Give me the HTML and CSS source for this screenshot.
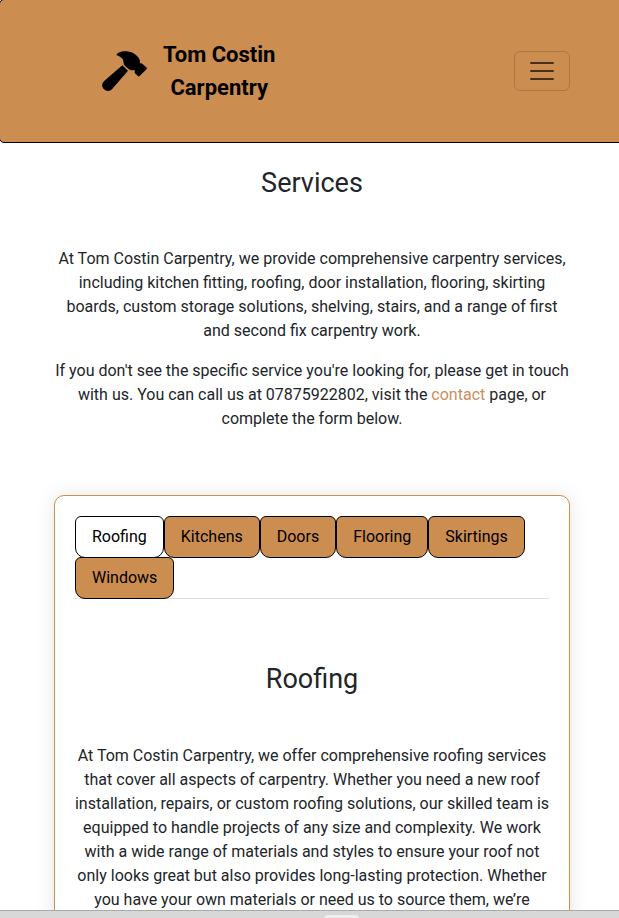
FILE: index.html
```html
<!DOCTYPE html>
<html lang="en">
<head>
<meta charset="utf-8">
<title>Tom Costin Carpentry</title>
<link rel="stylesheet" href="styles.css">
</head>
<body>
<div class="page">
  <header class="header">
    <a class="brand">
      <svg class="hammer" viewBox="0 0 135 121" fill="currentColor" aria-hidden="true"><path d="M45 8C55 1 65 0 74 1C86 2 96 6 103 13L109 19Q115 26 114 38Q119 36 123 40L134 50Q136 52 134 55L113 76Q111 78 108 76L99 67Q97 64 100 58Q90 60 81 55L69 45Q64 40 64 31L63 26Q57 17 45 13Q42 10 45 8Z"/><path d="M61 43L78 60L31 114C24 122 13 123 6 116C-2 109-2 98 6 91Z"/></svg>
      <span class="brand-name">Tom Costin<br>Carpentry</span>
    </a>
    <button class="toggler" aria-label="Menu">
      <svg width="30" height="30" viewBox="0 0 30 30"><path stroke="currentColor" stroke-linecap="round" stroke-miterlimit="10" stroke-width="2" d="M4 7h22M4 15h22M4 23h22"/></svg>
    </button>
  </header>
  <main class="container">
    <h2 class="title">Services</h2>
    <p>At Tom Costin Carpentry, we provide comprehensive carpentry services, including kitchen fitting, roofing, door installation, flooring, skirting boards, custom storage solutions, shelving, stairs, and a range of first and second fix carpentry work.</p>
    <p>If you don't see the specific service you're looking for, please get in touch with us. You can call us at 07875922802, visit the <a class="link">contact</a> page, or complete the form below.</p>
    <section class="card">
      <ul class="tabs">
        <li class="tab active">Roofing</li>
        <li class="tab">Kitchens</li>
        <li class="tab">Doors</li>
        <li class="tab">Flooring</li>
        <li class="tab">Skirtings</li>
        <li class="tab">Windows</li>
      </ul>
      <h2 class="panel-title">Roofing</h2>
      <p class="panel-text">At Tom Costin Carpentry, we offer comprehensive roofing services that cover all aspects of carpentry. Whether you need a new roof installation, repairs, or custom roofing solutions, our skilled team is equipped to handle projects of any size and complexity. We work with a wide range of materials and styles to ensure your roof not only looks great but also provides long-lasting protection. Whether you have your own materials or need us to source them, we’re</p>
    </section>
  </main>
</div>
<div class="bottom-bar"><span class="handle"></span></div>
</body>
</html>
```
FILE: styles.css
```css
* { box-sizing: border-box; }

body {
  margin: 0;
  height: 918px;
  overflow: hidden;
  display: flex;
  flex-direction: column;
  background: #fff;
  color: #212529;
  font: 400 16px/24px Roboto, sans-serif;
}

.page {
  flex: 0 0 910px;
  width: 624px;
  overflow: hidden;
}

.header {
  height: 144px;
  margin: -1px 0 0 -1px;
  padding: 0 53px 0 102px;
  display: flex;
  align-items: center;
  justify-content: space-between;
  background: #cc8d51;
  border: 1px solid #000;
  border-radius: 5px;
}

.brand {
  display: flex;
  align-items: center;
  gap: 16px;
  color: #000;
}

.hammer { width: 45px; height: 40px; }

.brand-name {
  font-size: 22px;
  font-weight: 700;
  line-height: 33px;
  text-align: center;
}

.toggler {
  width: 56px;
  height: 40px;
  padding: 0;
  display: flex;
  align-items: center;
  justify-content: center;
  background: transparent;
  border: 1px solid rgba(0, 0, 0, .15);
  border-radius: 6px;
  color: rgba(0, 0, 0, .65);
}

.toggler svg { fill: none; }

.container {
  width: 516px;
  margin: 0 auto;
  text-align: center;
}

h2 {
  margin: 0;
  font-size: 27px;
  font-weight: 400;
  line-height: 32px;
}

.title { padding: 24px 0 48px; }

p { margin: 0 0 16px; }

.link { color: #cc8d60; }

.card {
  margin-top: 64px;
  padding: 20px;
  height: 600px;
  border: 1px solid #cc8d51;
  border-radius: 10px;
  box-shadow: 0 0 20px rgba(0, 0, 0, .1);
}

.tabs {
  display: flex;
  flex-wrap: wrap;
  margin: 0 0 64px;
  padding: 0;
  list-style: none;
  border-bottom: 1px solid #dee2e6;
}

.tab {
  height: 42px;
  margin-bottom: -1px;
  padding: 8px 16px;
  background: #cc8d51;
  border: 1px solid #000;
  border-radius: 6px 6px 10px 10px;
  color: #000;
}

.tab.active { background: #fff; }

.panel-title { margin-bottom: 49px; }

.panel-text { 
  margin: 0 -1px;
  padding: 0 .4px;
  text-wrap: wrap;
}

.bottom-bar {
  flex: 0 0 8px;
  display: flex;
  padding: 4px 0 0 324px;
  background: #d8d8d8;
  border-top: 1px solid #aaa;
  overflow: hidden;
}

.handle {
  width: 35px;
  height: 8px;
  border-radius: 4px 4px 0 0;
  background: #eee;
}
```
